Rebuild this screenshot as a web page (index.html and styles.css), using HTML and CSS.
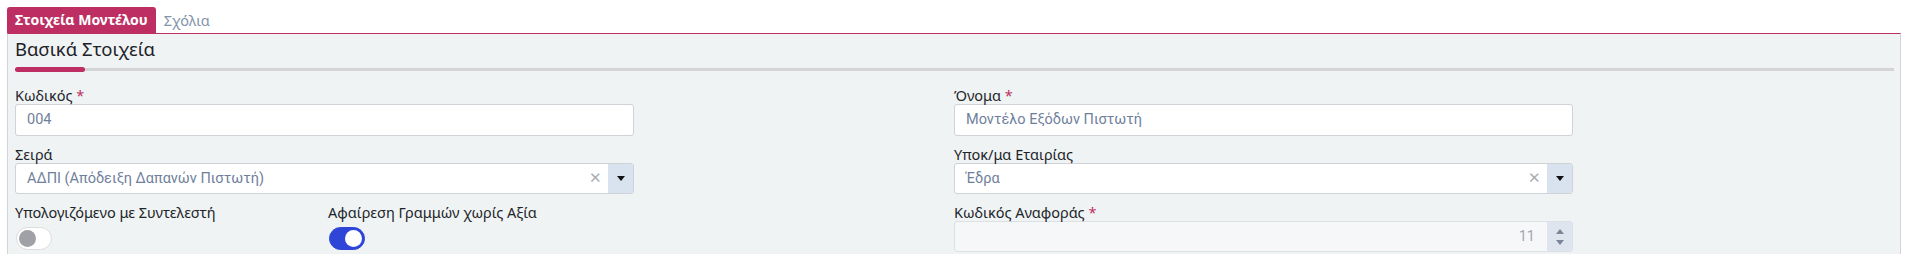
FILE: index.html
```html
<!DOCTYPE html>
<html>
	<head>
		<meta charset="utf-8">
		<title>Μοντέλο</title>
		<link rel="stylesheet" href="styles.css">
	</head>
	<body>
		<div class="tabs">
			<span class="tab active">Στοιχεία Μοντέλου</span>
			<span class="tab">Σχόλια</span>
		</div>
		<div class="panel">
			<div class="title">Βασικά Στοιχεία</div>
			<div class="title-line"></div>

			<div class="form">
				<div class="field">
					<label>Κωδικός <b class="req">*</b></label>
					<div class="input">004</div>
				</div>
				<div class="field">
					<label>Όνομα <b class="req">*</b></label>
					<div class="input">Μοντέλο Εξόδων Πιστωτή</div>
				</div>

				<div class="field">
					<label>Σειρά</label>
					<div class="select">
						<span class="value">ΑΔΠΙ (Απόδειξη Δαπανών Πιστωτή)</span>
						<span class="clear">&#x2715;</span>
						<span class="arrow"><i></i></span>
					</div>
				</div>
				<div class="field">
					<label>Υποκ/μα Εταιρίας</label>
					<div class="select">
						<span class="value">Έδρα</span>
						<span class="clear">&#x2715;</span>
						<span class="arrow"><i></i></span>
					</div>
				</div>

				<div class="switches">
					<div class="field">
						<label>Υπολογιζόμενο με Συντελεστή</label>
						<div class="switch"><span class="knob"></span></div>
					</div>
					<div class="field">
						<label>Αφαίρεση Γραμμών χωρίς Αξία</label>
						<div class="switch on"><span class="knob"></span></div>
					</div>
				</div>
				<div class="field">
					<label>Κωδικός Αναφοράς <b class="req">*</b></label>
					<div class="number">
						<span class="value">11</span>
						<span class="spin">
							<i class="up"></i>
							<i class="down"></i>
						</span>
					</div>
				</div>
			</div>
		</div>
	</body>
</html>
```

FILE: styles.css
```css
* {
	margin: 0;
	padding: 0;
	box-sizing: border-box;
}
body {
	background: #fff;
	font-family: "Noto Sans", "Open Sans", sans-serif;
	font-size: 14.5px;
	color: #222;
}

/* tabs */
.tabs {
	display: flex;
	align-items: flex-end;
	padding: 7px 0 0 7px;
}
.tab {
	height: 26px;
	line-height: 26px;
	padding: 0 8px;
	font-size: 14.5px;
	color: #8493a8;
}
.tab.active {
	background: #bd2f63;
	color: #fff;
	font-weight: bold;
	font-size: 14px;
	padding: 0 8px;
	border-radius: 3px 3px 0 0;
}

/* panel */
.panel {
	margin: 0 12px 0 7px;
	height: 240px;
	background: #f0f3f4;
	border-top: 1px solid #bd2f63;
	border-left: 1px solid #d4d4d4;
	border-right: 1px solid #d4d4d4;
	padding: 3px 6px 0 7px;
}
.title {
	font-size: 18.5px;
	line-height: 24px;
	color: #1e2229;
}
.title-line {
	position: relative;
	height: 3px;
	margin-top: 7px;
	background: #d4d4d4;
}
.title-line::before {
	content: "";
	position: absolute;
	left: 0;
	top: -1px;
	width: 70px;
	height: 5px;
	border-radius: 3px;
	background: #bd2f63;
}

/* form */
.form {
	display: grid;
	grid-template-columns: 619px 619px;
	column-gap: 320px;
	row-gap: 9px;
	margin-top: 15px;
}
.field label {
	display: block;
	line-height: 18px;
	height: 18px;
	color: #212529;
	white-space: nowrap;
}
.req {
	color: #bd2f63;
	font-weight: normal;
}
.input, .select, .number {
	height: 32px;
	background: #fff;
	border: 1px solid #cfd3d8;
	border-radius: 3px;
	font-family: Roboto, "Noto Sans", sans-serif;
	font-size: 14.5px;
	color: #6f7f9c;
	line-height: 30px;
}
.input {
	padding-left: 11px;
}
.select {
	display: flex;
	height: 31px;
	line-height: 29px;
}
.select .value {
	flex: 1;
	padding-left: 11px;
}
.select .clear {
	width: 26px;
	color: #a9adb3;
	font-size: 15px;
	text-align: center;
}
.select .arrow {
	width: 25px;
	background: #d9e2ef;
	border-radius: 0 2px 2px 0;
	display: flex;
	align-items: center;
	justify-content: center;
}
.select .arrow i, .spin i {
	display: block;
	width: 0;
	height: 0;
	border-left: 4px solid transparent;
	border-right: 4px solid transparent;
	border-top: 5px solid #111;
}

/* switches */
.switches {
	display: grid;
	grid-template-columns: 313px 1fr;
}
.switch {
	position: relative;
	width: 36px;
	height: 23px;
	margin-top: 6px;
	margin-left: 1px;
	border: 1px solid #dcdcdc;
	border-radius: 12px;
	background: #fff;
}
.switch .knob {
	position: absolute;
	left: 2px;
	top: 2px;
	width: 17px;
	height: 17px;
	border-radius: 50%;
	background: #a0a1a6;
}
.switch.on {
	background: #2f45d8;
	border-color: #2f45d8;
}
.switch.on .knob {
	left: auto;
	right: 2px;
	background: #fff;
}

/* number */
.number {
	display: flex;
	height: 31px;
	background: #f5f7f9;
	border-color: #dde1e6;
	color: #a3a8b0;
}
.number .value {
	flex: 1;
	text-align: right;
	padding-right: 12px;
}
.spin {
	width: 25px;
	background: #dee5ee;
	display: flex;
	flex-direction: column;
	align-items: center;
	justify-content: center;
	gap: 6px;
}
.spin i {
	border-top-color: #7a8696;
}
.spin i.up {
	border-top: 0;
	border-bottom: 5px solid #7a8696;
}
```
